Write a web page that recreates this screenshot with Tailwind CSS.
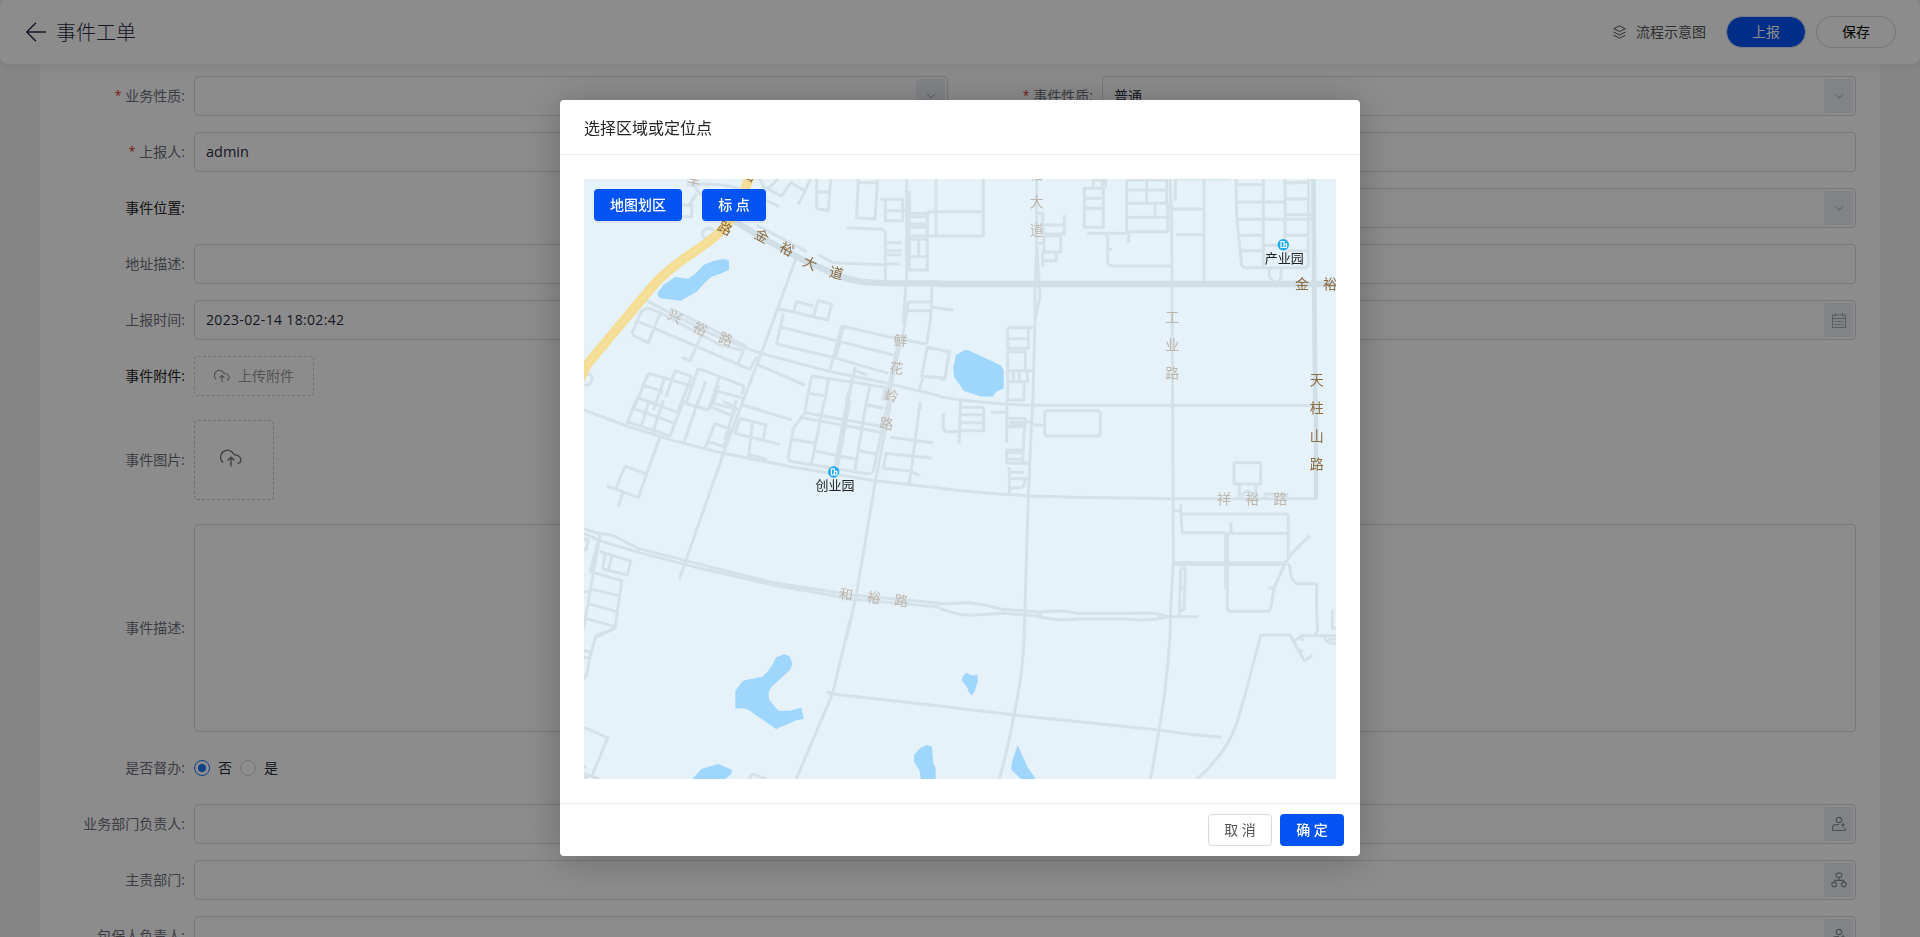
<!DOCTYPE html>
<html lang="zh-CN">
<head>
<meta charset="utf-8">
<title>事件工单</title>
<script src="https://cdn.jsdelivr.net/npm/@tailwindcss/browser@4"></script>
</head>
<body class="h-[937px] w-[1920px] overflow-hidden bg-[#f4f4f4] font-['Open_Sans','Noto_Sans_CJK_SC',sans-serif] text-sm text-[#2b2d42]">
<svg class="hidden">
  <symbol id="down" viewBox="0 0 10 6"><path d="M1 .8l4 4.2 4-4.2" fill="none" stroke="currentColor"/></symbol>
  <symbol id="cloud" viewBox="0 0 22 18"><path d="M3 13.6A7 7 0 1 1 13.6 4.8L15 6C19 6 21 8.600 20.800 11.200 20.600 13.200 19.400 14.400 17.600 14.400M11 17.600V8.600M7.600 11.600L11 8.200l3.400 3.400" fill="none" stroke="currentColor" stroke-width="1.400"/></symbol>
  <symbol id="user" viewBox="0 0 16 16"><g fill="none" stroke="currentColor" stroke-width="1.200"><circle cx="8" cy="4" r="2.700"/><path d="M8 8.600H5C2.500 8.600 1.500 10 1.500 12v1.200q0 1.300 1.300 1.300h10.400q1.300 0 1.300-1.300V12M12 6.800v4.600M10.400 8.800h3.200"/></g></symbol>
  <symbol id="org" viewBox="0 0 16 16"><g fill="none" stroke="currentColor" stroke-width="1.200"><rect x="5.200" y="1.200" width="5.600" height="4.200" rx="1.800"/><path d="M8 5.400v2.800M3.400 10V8.300h9.200V10"/><circle cx="3.200" cy="12.400" r="2.300"/><circle cx="12.800" cy="12.400" r="2.300"/></g></symbol>
</svg>

<div class="flex h-full flex-col">
  <header class="relative z-10 flex h-16 shrink-0 items-center rounded-lg bg-white pr-6 pl-[26px] shadow-[0_4px_14px_rgba(70,90,130,0.1)]">
    <svg class="h-5 w-5 text-[#2b2b4a]" viewBox="0 0 20 20" fill="none" stroke="currentColor" stroke-width="1.400"><path d="M20 10H1M10 .8L.8 10 10 19.200"/></svg>
    <h1 class="ml-[10px] pt-0.5 text-xl font-light text-[#2b2b4a]">事件工单</h1>
    <div class="ml-auto flex items-center">
      <svg class="h-[14px] w-[13px] text-[#555]" viewBox="0 0 13 14" fill="none" stroke="currentColor"><path d="M6.500.8L12.300 3.700 6.500 6.600.7 3.700zM.5 7l6 3 6-3M.5 10.200l6 3 6-3"/></svg>
      <span class="ml-[10px] text-[#555]">流程示意图</span>
      <button class="ml-5 h-8 w-20 rounded-full border border-[#d8e2f5] bg-[#0052f2] text-white">上报</button>
      <button class="ml-[10px] h-8 w-20 rounded-full border border-[#d6d7dc] bg-white text-black">保存</button>
    </div>
  </header>

  <main class="mx-10 flex min-h-0 flex-1 flex-col gap-4 bg-white pt-3 pr-6 text-[#6f717d]">
    <div class="flex h-10 shrink-0">
      <div class="flex w-[154px] items-center justify-end pr-[9px]"><span class="mr-1 text-xs text-[#e02020]">*</span>业务性质:</div>
      <div class="flex w-[754px] items-center rounded border border-[#d8d9e3] p-0.5"><span class="ml-auto grid h-[34px] w-[29px] place-items-center rounded-xs bg-[#ebeff6] text-[#a3a7b0]"><svg class="h-1.5 w-2.5"><use href="#down"/></svg></span></div>
      <div class="flex w-[154px] items-center justify-end pr-[9px]"><span class="mr-1 text-xs text-[#e02020]">*</span>事件性质:</div>
      <div class="flex w-[754px] items-center rounded border border-[#d8d9e3] p-0.5"><span class="pl-[9px] text-[#2b2d42]">普通</span><span class="ml-auto grid h-[34px] w-[29px] place-items-center rounded-xs bg-[#ebeff6] text-[#a3a7b0]"><svg class="h-1.5 w-2.5"><use href="#down"/></svg></span></div>
    </div>
    <div class="flex h-10 shrink-0">
      <div class="flex w-[154px] items-center justify-end pr-[9px]"><span class="mr-1 text-xs text-[#e02020]">*</span>上报人:</div>
      <div class="flex w-[1662px] items-center rounded border border-[#d8d9e3] pl-[11px] text-[14.5px] text-[#2b2d42]">admin</div>
    </div>
    <div class="flex h-10 shrink-0">
      <div class="flex w-[154px] items-center justify-end pr-[9px] text-[#222]">事件位置:</div>
      <div class="ml-auto flex w-[754px] items-center rounded border border-[#d8d9e3] p-0.5"><span class="ml-auto grid h-[34px] w-[29px] place-items-center rounded-xs bg-[#ebeff6] text-[#a3a7b0]"><svg class="h-1.5 w-2.5"><use href="#down"/></svg></span></div>
    </div>
    <div class="flex h-10 shrink-0">
      <div class="flex w-[154px] items-center justify-end pr-[9px]">地址描述:</div>
      <div class="w-[1662px] rounded border border-[#d8d9e3]"></div>
    </div>
    <div class="flex h-10 shrink-0">
      <div class="flex w-[154px] items-center justify-end pr-[9px]">上报时间:</div>
      <div class="flex w-[1662px] items-center rounded border border-[#d8d9e3] p-0.5"><span class="pl-[9px] tracking-[0.33px] text-[#2b2d42]">2023-02-14 18:02:42</span><span class="ml-auto grid h-[34px] w-[29px] place-items-center rounded-xs bg-[#ebeff6] text-[#a3a7b0]"><svg class="h-[15px] w-[14px]" viewBox="0 0 14 15" fill="none" stroke="currentColor"><rect x=".5" y="2" width="13" height="12.400"/><path d="M0 5.500h14M3.500 0v3.500M10.500 0v3.500M2.500 8.500h9M2.500 11.500h9" /><path d="M5 7v6M9 7v6" stroke="#ebeff6"/></svg></span></div>
    </div>
    <div class="flex h-10 shrink-0">
      <div class="flex w-[154px] items-center justify-end pr-[9px] text-[#222]">事件附件:</div>
      <div class="flex w-[120px] items-center rounded border border-dashed border-[#d0d0d0] pl-[19px] text-[#9a9a9a]"><svg class="h-[14px] w-4 text-[#858585]"><use href="#cloud"/></svg><span class="ml-2">上传附件</span></div>
    </div>
    <div class="flex h-24 shrink-0 items-center">
      <div class="w-[154px] pr-[9px] text-right">事件图片:</div>
      <div class="grid size-20 place-items-center rounded border border-dashed border-[#c8c8cc] text-[#777]"><svg class="mr-1.5 mb-1 h-[18px] w-[22px]"><use href="#cloud"/></svg></div>
    </div>
    <div class="flex h-52 shrink-0">
      <div class="flex w-[154px] items-center justify-end pr-[9px]">事件描述:</div>
      <div class="w-[1662px] rounded border border-[#d8d9e3]"></div>
    </div>
    <div class="flex h-10 shrink-0 items-center">
      <div class="w-[154px] pr-[9px] text-right">是否督办:</div>
      <span class="grid size-4 place-items-center rounded-full border border-[#1677ff]"><i class="size-2 rounded-full bg-[#1677ff]"></i></span><span class="ml-2 text-[#2b2d42]">否</span>
      <span class="ml-2 size-4 rounded-full border border-[#d4d4d8]"></span><span class="ml-2 text-[#2b2d42]">是</span>
    </div>
    <div class="flex h-10 shrink-0">
      <div class="flex w-[154px] items-center justify-end pr-[9px]">业务部门负责人:</div>
      <div class="flex w-[1662px] items-center rounded border border-[#d8d9e3] p-0.5"><span class="ml-auto grid h-[34px] w-[29px] place-items-center rounded-xs bg-[#ebeff6] text-[#8c9099]"><svg class="size-4"><use href="#user"/></svg></span></div>
    </div>
    <div class="flex h-10 shrink-0">
      <div class="flex w-[154px] items-center justify-end pr-[9px]">主责部门:</div>
      <div class="flex w-[1662px] items-center rounded border border-[#d8d9e3] p-0.5"><span class="ml-auto grid h-[34px] w-[29px] place-items-center rounded-xs bg-[#ebeff6] text-[#8c9099]"><svg class="size-4"><use href="#org"/></svg></span></div>
    </div>
    <div class="flex h-10 shrink-0">
      <div class="flex w-[154px] items-center justify-end pr-[9px]">包保人负责人:</div>
      <div class="flex w-[1662px] items-center rounded border border-[#d8d9e3] p-0.5"><span class="ml-auto grid h-[34px] w-[29px] place-items-center rounded-xs bg-[#ebeff6] text-[#8c9099]"><svg class="size-4"><use href="#user"/></svg></span></div>
    </div>
  </main>
</div>

<div class="fixed inset-0 z-20 flex items-start justify-center bg-black/45 pt-[100px]">
  <section class="flex h-[756px] w-[800px] flex-col rounded bg-white shadow-[0_4px_40px_rgba(0,0,0,0.25)]">
    <h2 class="flex h-[55px] shrink-0 items-center border-b border-[#ececec] px-6 pt-px text-base text-[#262626]">选择区域或定位点</h2>
    <div class="relative m-6 h-[600px] shrink-0">
      <svg class="block h-[600px] w-[752px] bg-[#e5f2fa]" viewBox="0 0 752 600">
        <g fill="none" stroke="#d4e1e8" stroke-width="9" stroke-linejoin="round">
          <g transform="translate(-24 -89) scale(.33333)">
            <path d="M380 285C430 280 500 280 545 300M400 266L410 300 430 320M410 310L385 350M366 345H395V380H366M430 440C420 425 440 405 460 420M428 438L445 452M600 266L610 290 665 318 690 280M620 300L655 266M615 330L658 350M690 276L738 305M752 268L715 343M770 266V355L805 362 812 266M770 306H808M895 266L890 383 945 387 953 270M895 278H950M962 328H1028V392H976V328M976 362H1048M1102 366H1140M1040 266V580M1128 266V438M1048 303V540H1102V370H1048M1048 438H1140M1048 380H1102M1048 402H1102M1048 412H1102M1048 448H1102M1048 500H1102M1076 440V500"/>
            <path d="M860 413L968 418Q976 420 976 435V575M976 458H1025M976 482H1025M976 494H1025M976 522H1020M775 495L820 518 976 524M590 405L740 485M708 505L604 790 548 935M260 632L450 730 560 775 610 792 800 842 960 875 1140 918M330 655L560 770M215 732L235 685Q245 655 265 655L300 668 480 765 550 782 535 820M230 692L400 765 480 800 570 838 590 800M300 672L265 758 215 735M425 735L390 812 365 802M700 665L710 635 760 648M760 680L775 632 815 642 803 690 760 680 652 655M670 670L650 762 830 805 985 850M664 712L840 755 1000 795M845 708L810 840M850 712L828 800M845 708L1005 745 1098 762M1115 580V640L1110 700 1100 762M1045 636H1112M1045 662H1110M1115 652L1180 660M1045 636L1030 730 1005 830 985 932M1038 580L1030 700M1018 740L978 932"/>
            <path d="M1102 772L1168 785 1155 865 1085 858ZM1090 860L1075 905M594 825L735 885M885 830L865 932M878 870L858 932M885 842L922 855M755 858L900 880 990 895M755 858L740 935M805 865L795 932M745 910L795 918M930 890L920 932M975 895L968 932M925 945L970 955M70 855L90 853Q105 870 85 885L70 885M265 850L395 888M265 850L220 960M245 885L310 905M315 862L280 960M345 842L395 860 355 960M345 842L318 920M228 922L300 945M415 835L552 888 545 915M415 835L378 940 445 960M437 875L410 950M478 860L450 950M460 900L550 925M475 885L460 940 540 960M548 945L600 960M1080 935V960"/>
            <path d="M510 385L600 440 720 505 830 555C880 575 920 580 1000 580H1140" stroke="#d0dee6" stroke-width="19"/>
            <path d="M572 250C540 345 520 390 470 435 420 480 345 515 285 580L80 825 55 880" stroke="#f4dd94" stroke-width="29"/>
            <path d="M560 280C530 360 510 390 465 435 415 480 345 515 285 580L80 825" stroke="#f9eabb" stroke-width="1.500"/>
          </g>
          <g transform="translate(356 -89) scale(.33333)">
            <path d="M130 266V438H0M0 365H130M290 266V460L300 620 285 690 278 960M290 460L285 600V690M292 370H308V405H373M373 375V432H310V405M315 438H362V486H312V438M292 460H312M308 486V532M312 512H348V486M433 295H490V412H433ZM433 325H490M433 355H490M460 292V270H497V292M487 266V290M560 270V425H683V340H560M560 300H680V270H560M680 300V340M620 270V335M645 345V380M560 382H693M442 430H566V458M495 430Q503 435 503 450V515Q505 528 520 528H693M503 478H515M690 266L695 400 698 960M706 266V332M792 266V580M695 357H790M708 434H790M706 266H872"/>
            <path d="M888 266L890 380 905 525Q908 533 920 533H1095Q1105 533 1105 520V266M970 266V533M1035 266V480M890 284H970M890 336H1035M892 388H1125M897 436H970M900 482H970M1037 280L1103 276M1037 327H1103M1037 374H1125M1037 436H1103M970 466H1015M1037 482H1103M988 535V560L1008 588 1023 565V535M203 713H283M203 713V775H265V715M203 746H265M203 782V930H252V880M203 785H256V840M203 842H278M203 875H262V845M220 842V875M238 842V875M200 945V960M0 920C100 937 180 943 280 946H1130M0 780L28 785 15 868 0 866M0 656L40 659"/>
            <path d="M0 582H1188" stroke="#d0dee6" stroke-width="19"/><path d="M1120 266L1126 960" stroke="#d0dee6" stroke-width="14"/>
          </g>
          <g transform="translate(-24 221) scale(.33333)">
            <path d="M72 30L200 78 340 122 490 160 680 198 945 242 1140 264M228 0L200 75M268 0L245 75M310 0L278 98M372 0L330 108 200 65M220 25L345 70M250 0L355 38M375 10L445 30 455 0M415 0L372 128M450 20L520 48 525 20 490 5M548 15L695 60M465 70L510 88 490 140 445 125M465 70L435 145M540 55L618 75 610 115M540 55L525 100 660 133M578 65L565 175M570 165L622 178M550 0L492 155 358 538M530 0L495 120"/>
            <path d="M740 0L735 38 700 85 685 170Q683 183 700 185L925 222Q940 220 942 205L985 0M735 38L980 82M720 52L970 98M793 0L755 190M920 0L885 210M695 118L765 130M765 153L888 178M895 152L948 162M920 15L970 25M994 0L945 250 888 590 858 720M990 112L1118 128M1080 5L1060 165 1048 250M975 160L1115 174M978 162L970 205 1048 213 1080 226M300 110L235 292 140 258M195 198L260 222M195 198L168 265M188 280L175 320"/>
            <path d="M72 385Q100 400 155 405L235 445 400 488 640 548 880 585 1140 610M72 400Q110 420 150 432L240 458 400 500 640 555 880 598 1130 620 1140 624M120 405L90 515M120 405L70 690M72 415L85 420 78 450H72M120 455L212 483 203 525 128 507 135 462M155 470L145 510M90 515L185 542 165 685 105 712M95 568L175 587M88 612L170 635M75 655L165 680M72 575H90M235 442V458M640 546V560M1130 610V622"/>
            <path d="M866 0L827 210" stroke-width="17"/>
          </g>
          <g transform="translate(356 221) scale(.33333)">
            <path d="M278 0L265 290 252 720M698 0L700 480 692 630 690 720M0 265Q150 285 400 292L700 296H1130M62 0L57 130M62 22H125Q131 22 131 30V92H60M62 44H131M62 68H131M10 40V85Q12 95 30 95L60 94M153 37H198M200 0V128M200 55H255V80H200M207 66H278M207 73H250M275 75H312M314 76V100Q314 108 322 108H473Q481 108 481 100V40Q481 32 473 32H322Q314 32 314 40V76M253 80L248 190M200 190V150H248M200 158H248M200 178H248M200 190H268M208 202V280M208 217H252M208 236H268M255 236Q255 263 240 263H208M700 332H722V313M722 332L727 398H858M725 342H1037Q1045 342 1045 350V480M862 400H1045M873 367V398M862 400V625Q862 634 875 634H980Q990 634 993 620L1002 565 1035 490Q1060 450 1110 407M985 563H1003"/>
            <path d="M1042 490L1050 500Q1050 540 1070 551H1124Q1130 551 1130 560V640L1133 690 1127 705M730 500L722 512 718 650M730 500L736 512 732 625Q730 632 720 632M722 562H736M0 612L80 608Q110 608 190 628L300 636Q370 628 410 640H580Q650 635 685 650H775M0 626Q50 645 90 646L190 640 290 648Q350 665 410 657H560Q630 665 685 650M188 630V645M300 636V648M658 640V655M882 188H962V252H882ZM898 255V292M948 255V290M975 292V282H1040V296M905 290Q920 260 940 285M1177 630V685H1188"/>
            <path d="M860 400V568M700 491H1035" stroke-width="14"/><path d="M1128 0V298" stroke="#d0dee6" stroke-width="13"/>
          </g>
          <g transform="translate(-24 441) scale(.33333)">
            <path d="M165 25L108 48 90 110 80 165 70 177M72 92L95 96M72 112L90 116M72 322L143 353 97 465M72 460L120 478M72 440H78M72 472H84M570 478Q570 460 585 464L620 477M870 0L818 220 708 478M800 215L818 222 1140 258"/>
          </g>
          <g transform="translate(356 441) scale(.33333)">
            <path d="M252 50Q250 150 222 285 205 380 178 478M690 50Q680 200 657 330L632 478M0 258L222 285 657 330Q750 345 845 352M770 478Q860 400 890 310 910 250 962 45H1050L1093 122 1118 105M1060 65L1085 47H1188M1080 50L1090 62M1078 95L1088 90M1155 50Q1155 70 1188 70M1165 58H1188"/>
          </g>
        </g>
        <g fill="#9fd6fd">
          <path transform="translate(-24 -89) scale(.33333)" d="M490 507Q500 507 507 512V540L485 550 455 560Q435 575 410 605L362 632 300 625Q292 620 292 610L310 585 345 561 385 566Q410 550 430 525L460 513Z"/>
          <path transform="translate(356 -89) scale(.33333)" d="M75 780L85 781 182 826 191 840V895L168 906 158 920 120 919 72 903 42 860 40 830 48 795Z"/>
          <path transform="translate(-24 441) scale(.33333)" d="M673 103L688 108 698 132 690 150 635 200Q622 215 628 240L655 272H690L724 263 732 297 712 300 648 327 580 280Q560 260 526 266V212L549 182 606 170Q630 155 648 112ZM396 478L425 446 475 432 517 450 514 462 495 478ZM1100 375L1116 380 1120 430 1127 445V478H1083L1078 450 1062 425V405L1080 385Z"/>
          <path transform="translate(356 441) scale(.33333)" d="M80 158L93 166H113V185L105 212 95 227 85 215 82 203 66 182 68 168ZM233 375L262 440 288 478H244L213 448 216 425Z"/>
        </g>
        <g class="font-['Noto_Sans_CJK_SC',sans-serif]" font-size="14" text-anchor="middle" fill="#bfb6ab">
          <text transform="translate(110 1.700) rotate(12)" y="5">丰</text>
          <text transform="translate(91 137.700) rotate(26)" y="5">兴</text><text transform="translate(116.300 150) rotate(24)" y="5">裕</text><text transform="translate(141.700 160.300) rotate(20)" y="5">路</text>
          <text transform="translate(316.700 161.700) rotate(4)" y="5">鲜</text><text transform="translate(312.300 189.300) rotate(8)" y="5">花</text><text transform="translate(307.700 217) rotate(8)" y="5">岭</text><text transform="translate(302.300 244.700) rotate(8)" y="5">路</text>
          <text x="452.700" y="0">裕</text><text x="452.700" y="27.500">大</text><text x="452.700" y="55.500">道</text>
          <text x="588.300" y="143">工</text><text x="588.300" y="171">业</text><text x="588.300" y="199">路</text>
          <text transform="translate(262 415.700) rotate(7)" y="5">和</text><text transform="translate(289.700 418.700) rotate(7)" y="5">裕</text><text transform="translate(317.300 422) rotate(7)" y="5">路</text>
          <text x="640" y="325">祥</text><text x="668.300" y="325">裕</text><text x="696.300" y="325">路</text>
          <g fill="#8b6b42">
            <text transform="translate(165 -4) rotate(25)" y="5">山</text>
            <text transform="translate(141 49.300) rotate(28)" y="5">路</text><text transform="translate(177.700 57) rotate(28)" y="5">金</text><text transform="translate(202.700 70) rotate(28)" y="5">裕</text><text transform="translate(226 84.300) rotate(24)" y="5">大</text><text transform="translate(252.300 94) rotate(14)" y="5">道</text>
            <text x="718" y="109.500">金</text><text x="746" y="109.500">裕</text>
            <text x="732.700" y="206">天</text><text x="732.700" y="234">柱</text><text x="732.700" y="262">山</text><text x="732.700" y="290">路</text>
          </g>
          <g fill="#222" font-size="13" stroke="#e5f2fa" stroke-width="2" paint-order="stroke"><text x="700.300" y="83.500">产业园</text><text x="250.900" y="311">创业园</text></g>
        </g>
        <g fill="#1eaaf1"><circle cx="699.300" cy="65.700" r="5.700"/><circle cx="249.700" cy="293" r="5.700"/></g>
        <g fill="none" stroke="#fff" stroke-width="1.200"><path d="M697 68.500v-6h3v6zM700 65h2.500v3.500H700M247.400 295.800v-6h3v6zM250.400 292.300h2.500v3.500h-2.500"/></g>
      </svg>
      <div class="absolute top-[10px] left-[10px] flex gap-5">
        <button class="h-8 w-[88px] rounded bg-[#0454f4] font-medium text-white shadow-[0_2px_0_rgba(0,0,0,0.045)]">地图划区</button>
        <button class="h-8 w-16 rounded bg-[#0454f4] font-medium text-white shadow-[0_2px_0_rgba(0,0,0,0.045)]">标 点</button>
      </div>
    </div>
    <footer class="flex h-[53px] shrink-0 items-center justify-end gap-2 border-t border-[#ececec] px-4">
      <button class="h-8 w-16 rounded border border-[#d9d9d9] bg-white text-[#555]">取 消</button>
      <button class="h-8 w-16 rounded bg-[#0454f4] font-medium text-white">确 定</button>
    </footer>
  </section>
</div>
</body>
</html>
